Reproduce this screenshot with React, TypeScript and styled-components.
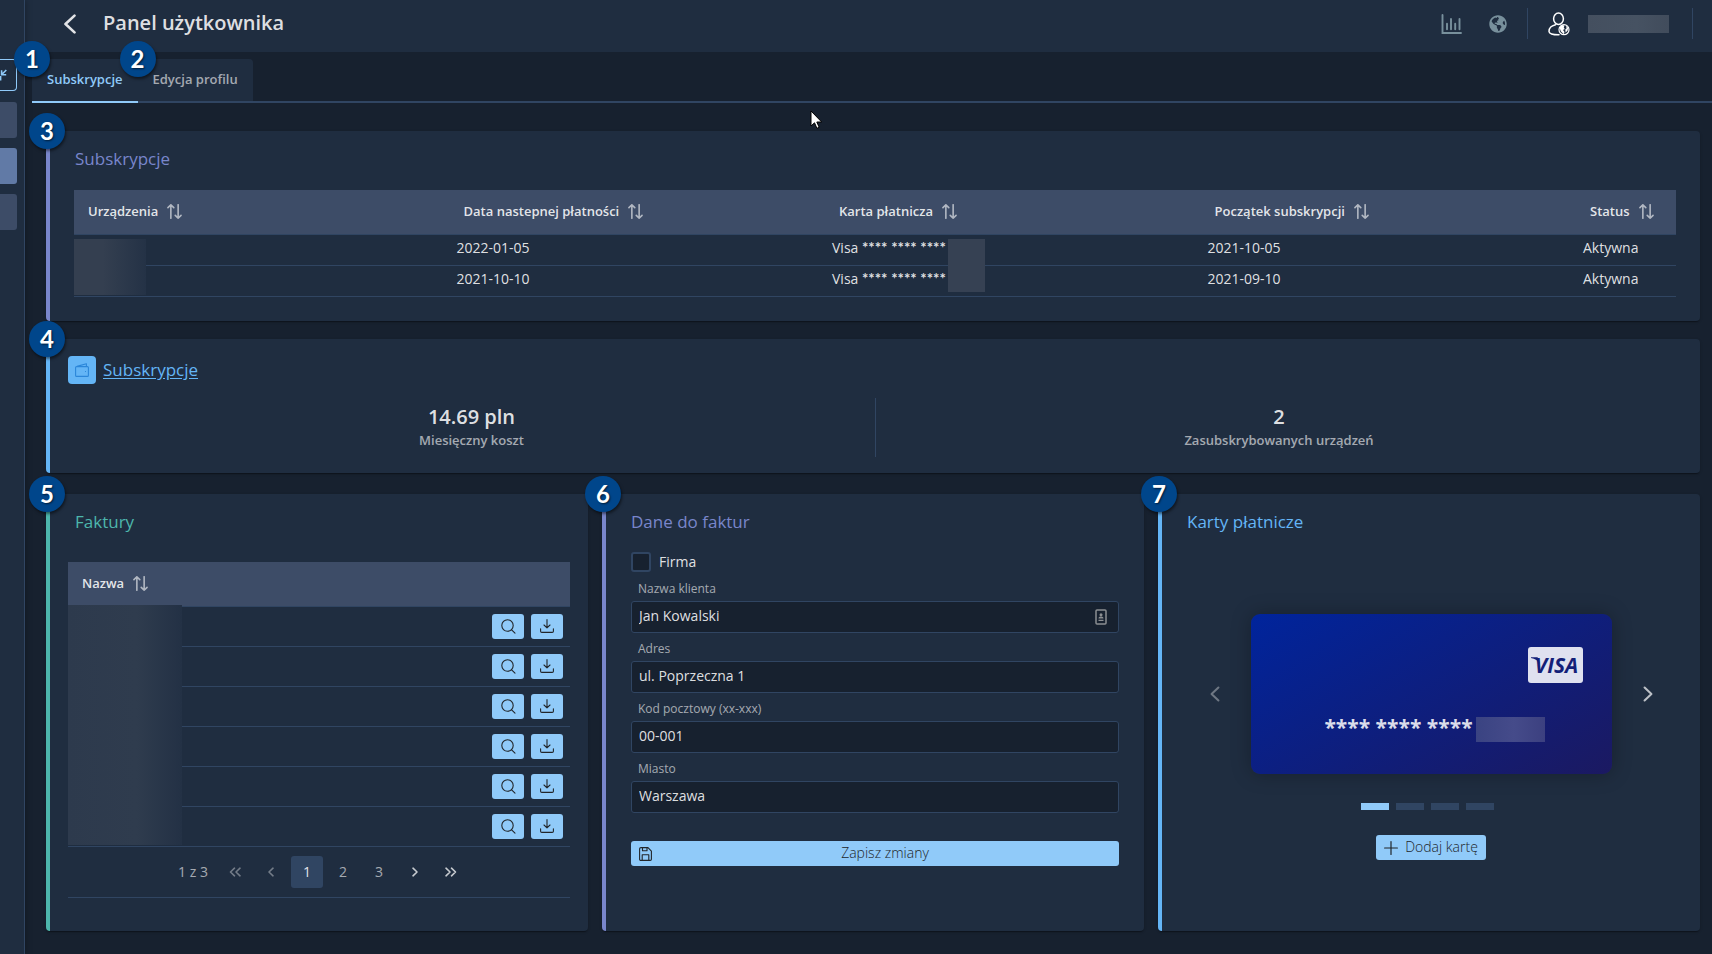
import React, { useState } from "react";
import styled, { createGlobalStyle } from "styled-components";
import { FaGlobeAmericas } from "react-icons/fa";

const c = {
  ground: "#17212f",
  card: "#1f2d40",
  border: "#304562",
  head: "#3d4c67",
  text: "rgba(255, 255, 255, 0.87)",
  muted: "rgba(255, 255, 255, 0.6)",
  primary: "#90caf9",
  blue: "#64b5f6",
  indigo: "#7986cb",
  teal: "#4db6ac",
  ink: "#212529",
};

const Global = createGlobalStyle`
  * { box-sizing: border-box; }
  body { margin: 0; background: ${c.ground}; color: ${c.text}; }
  body, button, input { font-family: "Open Sans", "Noto Sans", sans-serif; font-size: 14px; }
  button { margin: 0; padding: 0; border: 0; background: none; color: inherit; cursor: pointer; }
  h1, h2, p { margin: 0; }
  svg { display: block; }
`;

const Page = styled.div`
  position: relative;
  display: flex;
  min-height: 100vh;
  overflow: hidden;
`;

const Sidebar = styled.nav`
  flex: none;
  width: 25px;
  padding-top: 59px;
  display: flex;
  flex-direction: column;
  gap: 10px;
  background: ${c.card};
  border-right: 1px solid ${c.border};
  box-shadow: 0 0 7px rgba(0, 0, 0, 0.35);
  z-index: 1;
`;

const SideButton = styled.button<{ $active?: boolean }>`
  width: 17px;
  height: 36px;
  border-radius: 0 3px 3px 0;
  background: ${(p) => (p.$active ? "#617aa6" : c.head)};
`;

const CollapseButton = styled.button`
  width: 17px;
  height: 32px;
  margin-bottom: 1px;
  border: 1px solid ${c.primary};
  border-left: 0;
  border-radius: 0 4px 4px 0;
  color: ${c.primary};
`;

const Main = styled.div`
  flex: 1;
  min-width: 0;
`;

const Header = styled.header`
  height: 52px;
  padding: 0 19px 5px 38px;
  display: flex;
  align-items: center;
  justify-content: space-between;
  background: ${c.card};
`;

const HeaderGroup = styled.div<{ $gap: number }>`
  display: flex;
  align-items: center;
  gap: ${(p) => p.$gap}px;
`;

const HeaderTitle = styled.h1`
  padding-bottom: 2px;
  font-size: 20px;
  font-weight: 600;
  line-height: 28px;
`;

const IconButton = styled.button<{ $color?: string; $size?: number }>`
  display: flex;
  align-items: center;
  justify-content: center;
  width: ${(p) => p.$size ?? 28}px;
  height: ${(p) => p.$size ?? 28}px;
  color: ${(p) => p.$color ?? c.text};
`;

const Divider = styled.span`
  width: 1px;
  height: 31px;
  background: ${c.border};
`;

const Redacted = styled.span`
  width: 81px;
  height: 18px;
  margin-right: 3px;
  background: linear-gradient(90deg, #444f5f, #465262 60%, #414c5c);
`;

const Content = styled.main`
  padding: 7px 0 23px;
`;

const TabList = styled.div`
  display: flex;
  height: 44px;
  margin-left: 7px;
  border-bottom: 2px solid ${c.border};
`;

const Tab = styled.button<{ $active: boolean }>`
  position: relative;
  height: 44px;
  padding: 0 15px 3px;
  border-bottom: 2px solid ${(p) => (p.$active ? c.primary : c.border)};
  border-radius: 4px 4px 0 0;
  background: ${c.card};
  color: ${(p) => (p.$active ? c.primary : c.muted)};
  font-size: 13px;
  font-weight: 600;
`;

const Badge = styled.span`
  position: absolute;
  top: -18px;
  left: -18px;
  width: 36px;
  height: 36px;
  border-radius: 50%;
  background: #00468b;
  box-shadow: 1px 2px 3px rgba(0, 0, 0, 0.5);
  color: #fff;
  font: 700 24px/35px Lato, sans-serif;
  text-align: center;
  text-shadow: 1px 1px 2px rgba(0, 0, 0, 0.6);
  z-index: 2;
`;

const CardBadge = styled(Badge)`
  left: -21px;
`;

const Sections = styled.div`
  display: grid;
  gap: 18px;
  padding: 28px 12px 0 21px;
`;

const CardGrid = styled.div`
  display: grid;
  grid-template-columns: repeat(3, minmax(0, 1fr));
  gap: 14px;
  padding-top: 3px;
`;

const Card = styled.section<{ $accent: string }>`
  position: relative;
  padding: 16px 18px;
  border-left: 4px solid ${(p) => p.$accent};
  border-radius: 4px;
  background: ${c.card};
  box-shadow: 0 2px 1px -1px rgba(0, 0, 0, 0.3), 0 1px 3px rgba(0, 0, 0, 0.2);
`;

const CardTitle = styled.h2<{ $color: string }>`
  padding-left: 7px;
  color: ${(p) => p.$color};
  font-size: 17px;
  font-weight: 500;
  line-height: 24px;
`;

const TableArea = styled.div`
  position: relative;
  margin: 19px 6px 8px;
`;

const Table = styled.table`
  width: 100%;
  border-collapse: separate;
  border-spacing: 0;
  table-layout: fixed;
`;

const Th = styled.th`
  height: 45px;
  padding: 0 14px 2px;
  border-bottom: 1px solid ${c.border};
  background: ${c.head};
  font-size: 13px;
  font-weight: 600;
  text-align: left;
`;

const LastTh = styled(Th)`
  width: 100px;
`;

const SortButton = styled.button`
  display: flex;
  align-items: center;
  gap: 9px;
  font-size: 13px;
  font-weight: 600;
  white-space: nowrap;

  svg { color: ${c.muted}; }
`;

const Td = styled.td`
  height: 31px;
  padding: 0 7px 4px;
  border-bottom: 1px solid ${c.border};
  line-height: 20px;
  white-space: nowrap;
`;

const DeviceMask = styled.span`
  position: absolute;
  top: 49px;
  left: 0;
  width: 72px;
  height: 56px;
  background: linear-gradient(90deg, #343f50 40%, #243246);
`;

const CardCell = styled(Td)`
  position: relative;
`;

const Stars = styled.span`
  font: 700 15px/16px Lato, sans-serif;
`;

const CardMask = styled.span<{ $last: boolean }>`
  position: absolute;
  top: ${(p) => (p.$last ? 0 : 4)}px;
  left: 123px;
  width: 37px;
  height: ${(p) => (p.$last ? 26 : 27)}px;
  background: #364153;
`;

const SummaryHead = styled.div`
  display: flex;
  align-items: center;
  gap: 7px;
  height: 30px;
  margin-bottom: 13px;
`;

const WalletBox = styled.span`
  display: grid;
  place-items: center;
  width: 28px;
  height: 28px;
  border-radius: 4px;
  background: ${c.blue};
  color: #2b86d9;
`;

const SummaryLink = styled.a`
  color: ${c.blue};
  font-size: 17px;
  font-weight: 500;
  line-height: 24px;
  text-decoration: underline;
  text-underline-offset: 2px;
`;

const Stats = styled.div`
  display: grid;
  grid-template-columns: 1fr 1fr;
`;

const Stat = styled.div`
  height: 59px;
  padding-top: 6px;
  text-align: center;

  & + & { border-left: 1px solid ${c.border}; }
`;

const StatValue = styled.p`
  font-size: 20px;
  font-weight: 600;
  line-height: 26px;
`;

const StatLabel = styled.p`
  color: ${c.muted};
  font-size: 13px;
  font-weight: 600;
  line-height: 20px;
`;

const InvoiceArea = styled.div`
  position: relative;
  margin: 28px 0 17px;
`;

const InvoiceMask = styled.span`
  position: absolute;
  top: 43px;
  left: 0;
  width: 114px;
  height: 240px;
  background: linear-gradient(90deg, #2d3a4d, #2f3c4e 60%, #233145);
`;

const InvoiceTd = styled(Td)`
  height: 40px;
  padding: 0 7px 1px;
`;

const Actions = styled.div`
  display: flex;
  justify-content: flex-end;
  gap: 7px;
`;

const Button = styled.button<{ $wide?: boolean }>`
  display: flex;
  align-items: center;
  justify-content: center;
  gap: 7px;
  width: ${(p) => (p.$wide ? "100%" : "auto")};
  min-width: 32px;
  height: 25px;
  padding: 0 8px;
  border-radius: 3px;
  background: ${c.primary};
  color: ${c.ink};
  font-weight: 300;
  line-height: 20px;
`;

const ButtonLabel = styled.span`
  flex: 1;
  padding-bottom: 2px;
`;

const Paginator = styled.div`
  display: flex;
  align-items: center;
  justify-content: center;
  gap: 4px;
  padding: 9px 0;
  border-bottom: 1px solid ${c.border};
  color: ${c.muted};
`;

const PageInfo = styled.span`
  padding: 0 7px 2px;
`;

const PageButton = styled.button<{ $active?: boolean }>`
  display: grid;
  place-items: center;
  width: 32px;
  height: 32px;
  padding-bottom: 2px;
  border-radius: 3px;
  background: ${(p) => (p.$active ? c.border : "transparent")};
  color: ${(p) => (p.$active ? c.text : c.muted)};

  &:disabled { opacity: 0.5; }
`;

const PageArrow = styled(PageButton)`
  padding: 0;
  color: rgba(255, 255, 255, 0.75);
`;

const Form = styled.form`
  margin: 18px 7px 0;
`;

const CheckRow = styled.label`
  display: flex;
  align-items: center;
  gap: 8px;
  height: 20px;
  margin-bottom: 1px;
`;

const Checkbox = styled.input`
  appearance: none;
  width: 20px;
  height: 20px;
  margin: 0;
  border: 2px solid ${c.border};
  border-radius: 3px;
  background: ${c.ground};

  &:checked { background: ${c.primary}; }
`;

const CheckLabel = styled.span`
  padding-bottom: 2px;
`;

const Field = styled.div`
  position: relative;
  display: flex;
  flex-direction: column;
  gap: 4px;
  padding-top: 8px;
`;

const FieldLabel = styled.label`
  padding-left: 7px;
  color: ${c.muted};
  font-size: 12px;
  line-height: 16px;
`;

const Input = styled.input`
  width: 100%;
  height: 32px;
  padding: 0 7px 3px;
  border: 1px solid ${c.border};
  border-radius: 3px;
  background: ${c.ground};
  color: ${c.text};
  outline: 0;
`;

const AutofillMark = styled.span`
  position: absolute;
  right: 12px;
  bottom: 8px;
  color: #8c8f92;
`;

const FormFooter = styled.div`
  padding-top: 28px;
`;

const Carousel = styled.div`
  display: flex;
  align-items: center;
  justify-content: center;
  gap: 22px;
  margin-top: 80px;
`;

const NavButton = styled(IconButton)`
  color: rgba(255, 255, 255, 0.7);

  &:disabled { opacity: 0.5; }
`;

const PaymentCard = styled.div`
  flex: 0 1 361px;
  height: 160px;
  padding: 33px 29px 0;
  border-radius: 9px;
  background: linear-gradient(150deg, #00249c, #1b1961);
  box-shadow: 0 0 20px rgba(0, 0, 0, 0.28);
`;

const VisaLogo = styled.div`
  position: relative;
  width: 55px;
  height: 36px;
  margin-left: auto;
  padding-left: 3px;
  border-radius: 3px;
  background: #dfe1ef;
  color: #141f78;
  font: italic 700 21px/36px "Open Sans", sans-serif;
  text-align: center;

  svg { position: absolute; top: 10px; left: 3px; }
`;

const CardNumber = styled.div`
  display: flex;
  justify-content: center;
  gap: 3px;
  margin-top: 34px;
  padding-left: 7px;
  font-size: 21px;
  font-weight: 700;
  line-height: 20px;
`;

const NumberMask = styled.span`
  width: 69px;
  height: 25px;
  background: linear-gradient(90deg, #3a4382, #454b8a 55%, #3c4080);
`;

const Indicators = styled.div`
  display: flex;
  justify-content: center;
  margin: 29px 0 25px;
`;

const Indicator = styled.button<{ $active: boolean }>`
  width: 28px;
  height: 7px;
  margin-right: 7px;
  background: ${(p) => (p.$active ? c.primary : c.border)};
`;

const Center = styled.div`
  display: flex;
  justify-content: center;
`;

const Pointer = styled.svg`
  position: absolute;
  top: 110px;
  left: 810px;
  z-index: 3;
`;

const SortIcon = () => (
  <svg width="15" height="15" viewBox="0 0 14 14" fill="none" stroke="currentColor" strokeWidth="1.5" strokeLinecap="round" strokeLinejoin="round">
    <path d="M3.6 13.3V.8M.9 3.4 3.6.7l2.7 2.7M10.4.7v12.5M7.7 10.6l2.700 2.700 2.700-2.700" />
  </svg>
);

const SearchIcon = () => (
  <svg width="15" height="15" viewBox="0 0 15 15" fill="none" stroke="currentColor" strokeWidth="1.1" strokeLinecap="round">
    <circle cx="6.5" cy="6.5" r="5.7" />
    <path d="m10.6 10.8 3.4 3.4" />
  </svg>
);

const DownloadIcon = () => (
  <svg width="14" height="14" viewBox="0 0 14 14" fill="none" stroke="currentColor" strokeWidth="1.1" strokeLinecap="round" strokeLinejoin="round">
    <path d="M7 .6v8.2M4 6l3 2.9L10 6M.6 9.8v2.4c0 .7.5 1.2 1.2 1.2h10.4c.7 0 1.2-.5 1.2-1.2V9.8" />
  </svg>
);

const SaveIcon = () => (
  <svg width="13" height="14" viewBox="0 0 13 14" fill="none" stroke="currentColor" strokeWidth="1.1" strokeLinejoin="round">
    <path d="M2 .6h7l3.4 3.6v8c0 .7-.5 1.2-1.2 1.2H1.8c-.7 0-1.2-.5-1.2-1.2V1.8C.6 1.1 1.1.6 2 .6ZM3.5.8v3H8v-3M3.2 13.2V7.7h6.600v5.500" />
  </svg>
);

const PlusIcon = () => (
  <svg width="14" height="14" viewBox="0 0 14 14" fill="none" stroke="currentColor" strokeWidth="1.2" strokeLinecap="round">
    <path d="M7 .6v12.8M.6 7h12.8" />
  </svg>
);

const WalletIcon = () => (
  <svg width="14" height="14" viewBox="0 0 14 14" fill="none" stroke="currentColor" strokeWidth="1.1" strokeLinejoin="round">
    <rect x=".6" y="3.6" width="12.8" height="9.8" rx="1" />
    <path d="M2 3.4 11.4.7v2.700M10 8.500h.9" />
  </svg>
);

const Chevron = ({ left, double, size = 14, weight = 1.6 }: { left?: boolean; double?: boolean; size?: number; weight?: number }) => (
  <svg width={size} height={size} viewBox="0 0 14 14" fill="none" stroke="currentColor" strokeWidth={weight} strokeLinecap="round" strokeLinejoin="round">
    <path
      transform={left ? "matrix(-1 0 0 1 14 0)" : undefined}
      d={double ? "m2 3.2 4 3.8-4 3.8M7.500 3.200l4 3.800-4 3.800" : "m5 3.200 4 3.800-4 3.800"}
    />
  </svg>
);

const BackIcon = () => (
  <svg width="14" height="20" viewBox="0 0 14 20" fill="none" stroke="currentColor" strokeWidth="2.6" strokeLinecap="round" strokeLinejoin="round">
    <path d="M11.500 1.600 2.500 10l9 8.400" />
  </svg>
);

const ChartIcon = () => (
  <svg width="21" height="20" viewBox="0 0 21 20" fill="none" stroke="currentColor" strokeWidth="1.9" strokeLinecap="round">
    <path d="M1.500 1v18h18.500M6 9.800v5.500M10 5v10.300M14.200 9.800v5.500M18.500 5v10.300" />
  </svg>
);

const UserIcon = () => (
  <svg width="22" height="24" viewBox="0 0 22 24" fill="none" stroke="currentColor" strokeWidth="1.5">
    <ellipse cx="10.5" cy="6.8" rx="4.9" ry="5.7" />
    <path d="M7.500 12.700C3.500 14 1 15.200 1 19.500c0 2 3.500 3.400 10 3.300" strokeLinecap="round" />
    <circle cx="16" cy="17.7" r="5" fill={c.card} strokeWidth="1.2" />
    <path d="M11.500 15.500l2.500-2.600 2.400.6-.6 2.300 1 1.200-1.800 1 1.500 2-.6 2.200-3-2.700zM17.800 13.800l2.400 2-.7 3-1.900 1.700-.3-3 1.400-1.200z" fill="currentColor" stroke="none" />
  </svg>
);

const ContactIcon = () => (
  <svg width="12" height="16" viewBox="0 0 12 16" fill="none">
    <rect x="1" y="1" width="10" height="14" rx="1" stroke="currentColor" strokeWidth="1.5" />
    <circle cx="6" cy="5.8" r="1.5" fill="currentColor" />
    <path d="M3.500 9.500c0-2.600 5-2.600 5 0zM3.500 10.700h5v1.200h-5z" fill="currentColor" />
  </svg>
);

const CollapseIcon = () => (
  <svg width="8" height="13" viewBox="0 0 8 13" fill="none" stroke="currentColor" strokeWidth="1.6">
    <path d="M6.300 1 2 5.300M1.600 1.200v4.500h4.600M.6 7v4.500" />
  </svg>
);

const columns = ["Urządzenia", "Data nastepnej płatności", "Karta płatnicza", "Początek subskrypcji"];
const subscriptions = [
  { next: "2022-01-05", brand: "Visa", start: "2021-10-05", status: "Aktywna" },
  { next: "2021-10-10", brand: "Visa", start: "2021-09-10", status: "Aktywna" },
];
const fields = [
  { id: "name", label: "Nazwa klienta", value: "Jan Kowalski", mark: true },
  { id: "address", label: "Adres", value: "ul. Poprzeczna 1" },
  { id: "zip", label: "Kod pocztowy (xx-xxx)", value: "00-001" },
  { id: "city", label: "Miasto", value: "Warszawa" },
];
const tabs = ["Subskrypcje", "Edycja profilu"];

export default function App() {
  const [tab, setTab] = useState(0);
  const [page, setPage] = useState(1);
  const [slide, setSlide] = useState(0);

  return (
    <Page>
      <Global />
      <Sidebar aria-label="Menu">
        <CollapseButton aria-label="Zwiń menu"><CollapseIcon /></CollapseButton>
        <SideButton aria-label="Urządzenia" />
        <SideButton $active aria-label="Panel" />
        <SideButton aria-label="Ustawienia" />
      </Sidebar>
      <Main>
        <Header>
          <HeaderGroup $gap={26}>
            <IconButton $size={14} aria-label="Wstecz"><BackIcon /></IconButton>
            <HeaderTitle>Panel użytkownika</HeaderTitle>
          </HeaderGroup>
          <HeaderGroup $gap={20}>
            <HeaderGroup $gap={24}>
              <IconButton $color="#78909c" aria-label="Wykresy"><ChartIcon /></IconButton>
              <IconButton $size={18} $color="#78909c" aria-label="Język"><FaGlobeAmericas size={18} /></IconButton>
            </HeaderGroup>
            <Divider />
            <HeaderGroup $gap={18}>
              <IconButton $size={22} $color="#fff" aria-label="Konto"><UserIcon /></IconButton>
              <Redacted />
            </HeaderGroup>
            <Divider />
          </HeaderGroup>
        </Header>
        <Content>
          <TabList role="tablist">
            {tabs.map((name, i) => (
              <Tab key={name} role="tab" aria-selected={tab === i} $active={tab === i} onClick={() => setTab(i)}>
                <Badge>{i + 1}</Badge>
                {name}
              </Tab>
            ))}
          </TabList>
          <Sections>
            <Card $accent={c.indigo}>
              <CardBadge>3</CardBadge>
              <CardTitle $color={c.indigo}>Subskrypcje</CardTitle>
              <TableArea>
                <Table>
                  <thead>
                    <tr>
                      {columns.map((name) => (
                        <Th key={name}><SortButton>{name}<SortIcon /></SortButton></Th>
                      ))}
                      <LastTh><SortButton>Status<SortIcon /></SortButton></LastTh>
                    </tr>
                  </thead>
                  <tbody>
                    {subscriptions.map((s, i) => (
                      <tr key={s.next}>
                        <Td />
                        <Td>{s.next}</Td>
                        <CardCell>{s.brand} <Stars>**** **** ****</Stars><CardMask $last={i === 1} /></CardCell>
                        <Td>{s.start}</Td>
                        <Td>{s.status}</Td>
                      </tr>
                    ))}
                  </tbody>
                </Table>
                <DeviceMask />
              </TableArea>
            </Card>

            <Card $accent={c.blue}>
              <CardBadge>4</CardBadge>
              <SummaryHead>
                <WalletBox><WalletIcon /></WalletBox>
                <SummaryLink href="#subskrypcje">Subskrypcje</SummaryLink>
              </SummaryHead>
              <Stats>
                <Stat><StatValue>14.69 pln</StatValue><StatLabel>Miesięczny koszt</StatLabel></Stat>
                <Stat><StatValue>2</StatValue><StatLabel>Zasubskrybowanych urządzeń</StatLabel></Stat>
              </Stats>
            </Card>

            <CardGrid>
              <Card $accent={c.teal}>
                <CardBadge>5</CardBadge>
                <CardTitle $color={c.teal}>Faktury</CardTitle>
                <InvoiceArea>
                  <Table>
                    <thead>
                      <tr><Th><SortButton>Nazwa<SortIcon /></SortButton></Th></tr>
                    </thead>
                    <tbody>
                      {[1, 2, 3, 4, 5, 6].map((n) => (
                        <tr key={n}>
                          <InvoiceTd>
                            <Actions>
                              <Button aria-label="Podgląd"><SearchIcon /></Button>
                              <Button aria-label="Pobierz"><DownloadIcon /></Button>
                            </Actions>
                          </InvoiceTd>
                        </tr>
                      ))}
                    </tbody>
                  </Table>
                  <InvoiceMask />
                  <Paginator>
                    <PageInfo>{page} z 3</PageInfo>
                    <PageArrow disabled={page === 1} onClick={() => setPage(1)} aria-label="Pierwsza"><Chevron left double /></PageArrow>
                    <PageArrow disabled={page === 1} onClick={() => setPage(page - 1)} aria-label="Poprzednia"><Chevron left /></PageArrow>
                    {[1, 2, 3].map((n) => (
                      <PageButton key={n} $active={page === n} onClick={() => setPage(n)}>{n}</PageButton>
                    ))}
                    <PageArrow disabled={page === 3} onClick={() => setPage(page + 1)} aria-label="Następna"><Chevron /></PageArrow>
                    <PageArrow disabled={page === 3} onClick={() => setPage(3)} aria-label="Ostatnia"><Chevron double /></PageArrow>
                  </Paginator>
                </InvoiceArea>
              </Card>

              <Card $accent={c.indigo}>
                <CardBadge>6</CardBadge>
                <CardTitle $color={c.indigo}>Dane do faktur</CardTitle>
                <Form onSubmit={(e) => e.preventDefault()}>
                  <CheckRow><Checkbox type="checkbox" /><CheckLabel>Firma</CheckLabel></CheckRow>
                  {fields.map((f) => (
                    <Field key={f.id}>
                      <FieldLabel htmlFor={f.id}>{f.label}</FieldLabel>
                      <Input id={f.id} defaultValue={f.value} />
                      {f.mark && <AutofillMark><ContactIcon /></AutofillMark>}
                    </Field>
                  ))}
                  <FormFooter>
                    <Button $wide type="submit"><SaveIcon /><ButtonLabel>Zapisz zmiany</ButtonLabel></Button>
                  </FormFooter>
                </Form>
              </Card>

              <Card $accent={c.blue}>
                <CardBadge>7</CardBadge>
                <CardTitle $color={c.blue}>Karty płatnicze</CardTitle>
                <Carousel>
                  <NavButton disabled={slide === 0} onClick={() => setSlide(slide - 1)} aria-label="Poprzednia karta">
                    <Chevron left size={24} weight={1.2} />
                  </NavButton>
                  <PaymentCard>
                    <VisaLogo>
                      VISA
                      <svg width="12" height="8" viewBox="0 0 12 8"><path d="M0 .3h5.500c1.200 0 1.800.6 2 1.500L8.700 7C7.300 3.500 4 1.300 0 .9z" fill="#141f78" /></svg>
                    </VisaLogo>
                    <CardNumber>**** **** ****<NumberMask /></CardNumber>
                  </PaymentCard>
                  <NavButton disabled={slide === 3} onClick={() => setSlide(slide + 1)} aria-label="Następna karta">
                    <Chevron size={24} weight={1.2} />
                  </NavButton>
                </Carousel>
                <Indicators>
                  {[0, 1, 2, 3].map((n) => (
                    <Indicator key={n} $active={slide === n} onClick={() => setSlide(n)} aria-label={`Karta ${n + 1}`} />
                  ))}
                </Indicators>
                <Center>
                  <Button><PlusIcon /><ButtonLabel>Dodaj kartę</ButtonLabel></Button>
                </Center>
              </Card>
            </CardGrid>
          </Sections>
        </Content>
      </Main>
      <Pointer width="13" height="20" viewBox="0 0 13 20">
        <path d="M1 1v15l3.500-3.200 2.400 5.500 2.300-1-2.400-5.300h4.900z" fill="#fff" stroke="#000" strokeWidth="1" />
      </Pointer>
    </Page>
  );
}
